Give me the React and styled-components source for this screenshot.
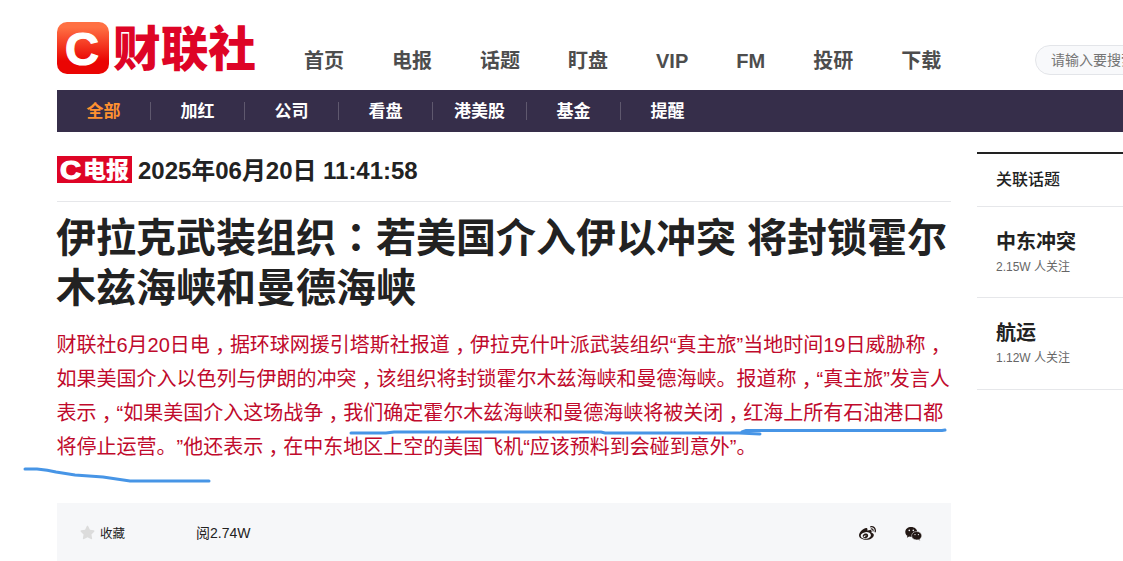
import React from "react";
import styled, { createGlobalStyle } from "styled-components";
import { FaStar, FaWeibo } from "react-icons/fa";

const menus = ["首页", "电报", "话题", "盯盘", "VIP", "FM", "投研", "下载"];
const tabs = ["全部", "加红", "公司", "看盘", "港美股", "基金", "提醒"];
const topics = [
  { name: "中东冲突", follow: "2.15W" },
  { name: "航运", follow: "1.12W" },
];
const titleLines = ["伊拉克武装组织：若美国介入伊以冲突 将封锁霍尔", "木兹海峡和曼德海峡"];
const bodyLines = [
  "财联社6月20日电，据环球网援引塔斯社报道，伊拉克什叶派武装组织“真主旅”当地时间19日威胁称，",
  "如果美国介入以色列与伊朗的冲突，该组织将封锁霍尔木兹海峡和曼德海峡。报道称，“真主旅”发言人",
  "表示，“如果美国介入这场战争，我们确定霍尔木兹海峡和曼德海峡将被关闭，红海上所有石油港口都",
  "将停止运营。”他还表示，在中东地区上空的美国飞机“应该预料到会碰到意外”。",
];

// fullwidth comma and colon sit in the middle of their cell
const withMarks = (line) =>
  line.split(/([，：])/).map((part, i) =>
    /^[，：]$/.test(part) ? (
      <Mark key={i} $low={part === "，"}>
        {part}
      </Mark>
    ) : (
      part
    )
  );

const App = () => {
  const [tab, setTab] = React.useState("全部");

  return (
    <Page>
      <GlobalStyle />
      <Header>
        <Logo />
        <Menu>
          {menus.map((name) => (
            <MenuItem key={name}>{name}</MenuItem>
          ))}
        </Menu>
        <Search placeholder="请输入要搜索的内容" />
      </Header>
      <TabBar>
        {tabs.map((name) => (
          <Tab key={name} $active={name === tab} onClick={() => setTab(name)}>
            <span>{name}</span>
          </Tab>
        ))}
      </TabBar>
      <Content>
        <Article>
          <DateRow>
            <Badge />
            <span>2025年06月20日 11:41:58</span>
          </DateRow>
          <Title>
            {titleLines.map((line) => (
              <Line key={line}>{withMarks(line)}</Line>
            ))}
          </Title>
          <BodyText>
            {bodyLines.map((line) => (
              <Line key={line}>{withMarks(line)}</Line>
            ))}
          </BodyText>
          <Strokes viewBox="0 0 940 80">
            <path d="M6 46H18Q29 47 37 49L56 52L84 54L111 58H190" />
            <path d="M332 10H367L375 9H582L586 10H720L741 11" />
            <path d="M723 9L727 7.500H923L926 7" />
          </Strokes>
          <Footer>
            <Collect>
              <FaStar />
              收藏
            </Collect>
            <Reads>阅2.74W</Reads>
            <Share>
              <FaWeibo />
              <Wechat />
            </Share>
          </Footer>
        </Article>
        <Side>
          <SideTitle>关联话题</SideTitle>
          {topics.map((topic) => (
            <Topic key={topic.name}>
              <h3>{topic.name}</h3>
              <p>{topic.follow} 人关注</p>
            </Topic>
          ))}
        </Side>
      </Content>
    </Page>
  );
};

const Logo = () => (
  <LogoSvg viewBox="0 0 200 90">
    <defs>
      <linearGradient id="logoBg" x1="0" y1="0" x2="0" y2="1">
        <stop offset="0.1" stopColor="#ff7043" />
        <stop offset="0.75" stopColor="#ea0503" />
      </linearGradient>
    </defs>
    <rect x="0" y="22" width="52" height="52" rx="10" fill="url(#logoBg)" />
    <Letter x="8" y="65" $size={47}>
      C
    </Letter>
    <Name x="56" y="66" $size={48} $color="#de0426" textLength="143" lengthAdjust="spacingAndGlyphs">
      财联社
    </Name>
  </LogoSvg>
);

const Badge = () => (
  <BadgeSvg viewBox="0 0 75 37">
    <rect y="4" width="75" height="27" fill="#de0426" />
    <Letter x="3" y="27" $size={26} textLength="21" lengthAdjust="spacingAndGlyphs">
      C
    </Letter>
    <Name x="26" y="26" $size={23} $color="#fff" textLength="46" lengthAdjust="spacingAndGlyphs">
      电报
    </Name>
  </BadgeSvg>
);

const Wechat = () => (
  <svg viewBox="0 0 17 17" width="17" height="17">
    <path
      d="M6.200 2C2.800 2 .3 4.100 .3 6.900c0 1.600.8 3 2.100 3.900l-.5 1.900 2.200-1.200c.7.2 1.300.3 2.100.3 3.400 0 6-2.200 6-4.900S9.600 2 6.200 2Z"
      fill="currentColor"
    />
    <path
      d="M11.700 6.500c-3 0-5.100 1.900-5.100 4.200s2.100 4.200 5.100 4.200c.6 0 1.100-.1 1.600-.2l1.900 1-.5-1.700c1.200-.8 2-1.900 2-3.300 0-2.300-2-4.200-5-4.200Z"
      fill="currentColor"
      stroke="#f6f7f9"
      strokeWidth="0.5"
    />
    <g fill="#f6f7f9">
      <circle cx="4.300" cy="5.400" r="0.800" />
      <circle cx="8.300" cy="5.400" r="0.800" />
      <circle cx="10" cy="9.600" r="0.650" />
      <circle cx="13.400" cy="9.600" r="0.650" />
    </g>
  </svg>
);

const GlobalStyle = createGlobalStyle`
  * {
    box-sizing: border-box;
  }
  body {
    margin: 0;
    background: #fff;
    color: #222;
    font-family: "Liberation Sans", "Noto Sans CJK SC", sans-serif;
    text-spacing-trim: space-all;
  }
`;

const Page = styled.div`
  height: 561px;
  padding-left: 57px;
  overflow: hidden;
`;

const Header = styled.header`
  display: flex;
  height: 90px;
`;

const LogoSvg = styled.svg`
  flex: none;
  width: 200px;
  height: 90px;
`;

const Letter = styled.text`
  font-family: "Liberation Sans", sans-serif;
  font-size: ${(props) => props.$size}px;
  font-weight: 700;
  fill: #fff;
  stroke: #fff;
  stroke-width: 1.2;
`;

const Name = styled.text`
  font-family: "Noto Sans CJK SC", sans-serif;
  font-size: ${(props) => props.$size}px;
  font-weight: 900;
  fill: ${(props) => props.$color};
`;

const Menu = styled.nav`
  display: flex;
  flex: none;
  gap: 48px;
  width: 731px;
  margin-left: 47px;
  padding-top: 46px;
`;

const MenuItem = styled.a`
  color: #4d4d4d;
  font-size: 20px;
  font-weight: 700;
  line-height: 30px;
  white-space: nowrap;
`;

const Search = styled.input`
  flex: none;
  width: 220px;
  height: 30px;
  margin-top: 45px;
  padding: 0 15px;
  border: 1px solid #e3e5e9;
  border-radius: 15px;
  background: #f8f9fb;
  font-family: inherit;
  font-size: 14px;
  &::placeholder {
    color: #757575;
  }
`;

const TabBar = styled.nav`
  display: flex;
  align-items: center;
  height: 42px;
  background: #362e4a;
`;

const Tab = styled.a`
  width: 94px;
  height: 18px;
  border-right: 1px solid #5f586e;
  color: ${(props) => (props.$active ? "#ff9130" : "#fff")};
  font-size: 17px;
  font-weight: 700;
  line-height: 20px;
  text-align: center;
  cursor: pointer;
  &:last-child {
    border-right-color: transparent;
  }
`;

const Content = styled.main`
  display: flex;
  gap: 26px;
  padding-top: 20px;
`;

const Article = styled.article`
  position: relative;
  flex: none;
  width: 894px;
`;

const DateRow = styled.div`
  display: flex;
  align-items: center;
  gap: 6px;
  height: 50px;
  padding-bottom: 12px;
  border-bottom: 1px solid #e6e7ea;
  font-size: 24px;
  font-weight: 700;
  letter-spacing: -0.03px;
  span {
    padding-bottom: 5px;
  }
`;

const BadgeSvg = styled.svg`
  width: 75px;
  height: 37px;
`;

const Title = styled.h1`
  margin: 11px 0 14px -1px;
  font-size: 40px;
  line-height: 50px;
`;

const Line = styled.span`
  display: block;
  white-space: nowrap;
`;

const Mark = styled.span`
  font-family: "Noto Sans CJK TC", sans-serif;
  line-height: 0;
  vertical-align: ${(props) => (props.$low ? "-7px" : "baseline")};
`;

const BodyText = styled.div`
  height: 176px;
  margin-left: -0.5px;
  padding-top: 1px;
  color: #c00a2c;
  font-size: 20px;
  line-height: 34px;
`;

const Strokes = styled.svg`
  position: absolute;
  top: 271px;
  left: -38px;
  width: 940px;
  height: 80px;
  fill: none;
  stroke: #4795e6;
  stroke-width: 3;
  stroke-linecap: round;
  pointer-events: none;
`;

const Footer = styled.footer`
  display: flex;
  align-items: center;
  height: 60px;
  padding: 0 29px 0 23px;
  background: #f6f7f9;
  font-size: 14px;
`;

const Collect = styled.div`
  display: flex;
  align-items: center;
  gap: 5px;
  width: 116px;
  padding-bottom: 1px;
  font-size: 12.5px;
  svg {
    color: #dcdcdc;
    font-size: 15px;
  }
`;

const Reads = styled.span`
  flex: 1;
  padding-bottom: 2px;
`;

const Share = styled.div`
  display: flex;
  gap: 29px;
  color: #231815;
  font-size: 17px;
`;

const Side = styled.aside`
  flex: none;
  width: 280px;
  border-top: 2px solid #222;
`;

const SideTitle = styled.h2`
  height: 53px;
  margin: 0;
  padding-left: 19px;
  border-bottom: 1px solid #e6e7ea;
  font-size: 16px;
  font-weight: 500;
  line-height: 52px;
`;

const Topic = styled.div`
  height: 91px;
  padding: 20px 0 0 19px;
  border-bottom: 1px solid #e6e7ea;
  h3 {
    margin: 0;
    font-size: 20px;
    line-height: 30px;
  }
  p {
    margin: 1px 0 0;
    color: #666;
    font-size: 12px;
    line-height: 18px;
  }
  &:last-child {
    height: 92px;
  }
`;

export default App;
